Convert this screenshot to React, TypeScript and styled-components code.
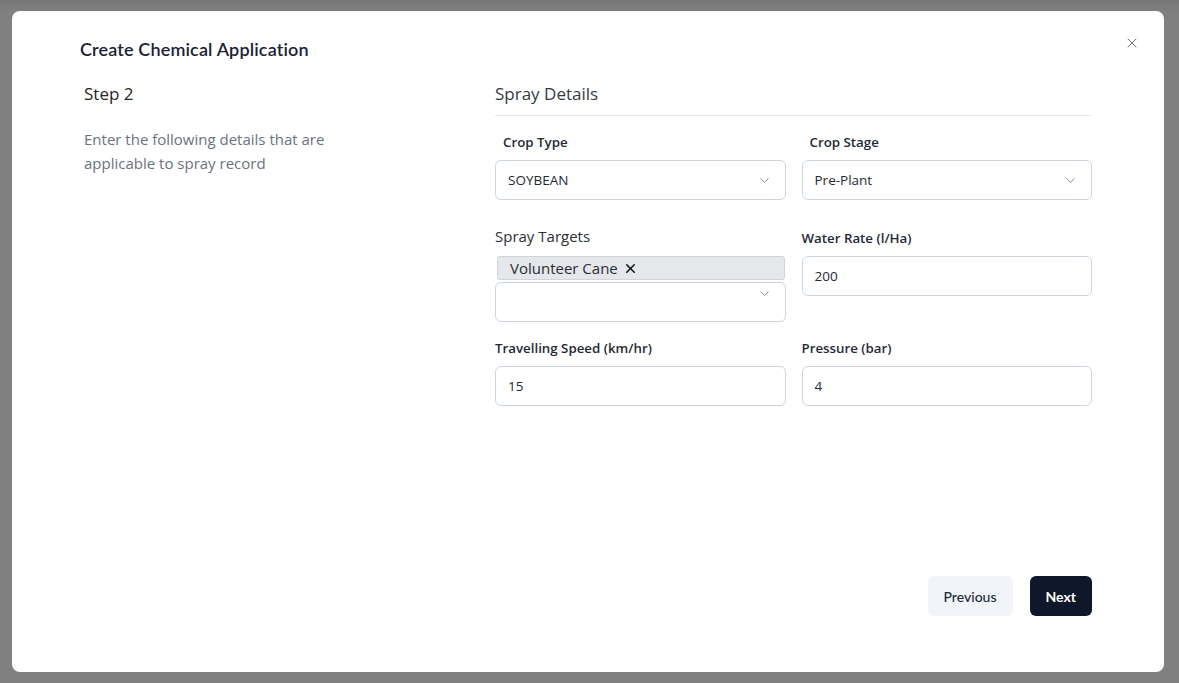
import styled, { createGlobalStyle } from 'styled-components'
import { ChevronDown, X } from 'lucide-react'

const GlobalStyle = createGlobalStyle`
    html, body {
        margin: 0;
        padding: 0;
        height: 100%;
    }
    body {
        font-family: 'Open Sans', 'Noto Sans', sans-serif;
        background: #808080;
    }
`

const Backdrop = styled.div`
    box-sizing: border-box;
    width: 1179px;
    height: 683px;
    padding: 11px 15px 11px 12px;
    background: linear-gradient(180deg, #777777 0, #808080 12px, #808080 100%);
`

const Modal = styled.div`
    box-sizing: border-box;
    height: 661px;
    display: flex;
    flex-direction: column;
    padding: 24px 72px 56px 68px;
    background: #ffffff;
    border-radius: 8px;
    position: relative;
`

const Header = styled.div`
    display: flex;
    align-items: center;
    height: 28px;
`

const Title = styled.h2`
    margin: 0;
    font-family: 'Lato', sans-serif;
    font-size: 18px;
    font-weight: 600;
    color: #1a2236;
    letter-spacing: 0.15px;
`

const CloseButton = styled.button`
    position: absolute;
    top: 20px;
    right: 20px;
    width: 24px;
    height: 24px;
    padding: 0;
    border: none;
    background: transparent;
    color: #6b7280;
    display: flex;
    align-items: center;
    justify-content: center;
`

const Body = styled.div`
    flex: 1;
    display: grid;
    grid-template-columns: 415px 1fr;
    margin-top: 19px;
    align-items: start;
`

const Intro = styled.div`
    padding-left: 4px;
`

const StepTitle = styled.div`
    font-size: 17px;
    line-height: 24px;
    color: #262626;
`

const StepText = styled.p`
    margin: 21px 0 0;
    width: 270px;
    font-size: 15px;
    line-height: 24px;
    color: #6b7280;
`

const Section = styled.div`
    display: flex;
    flex-direction: column;
`

const SectionTitle = styled.div`
    font-size: 17px;
    line-height: 24px;
    color: #333a44;
    padding-bottom: 9px;
    border-bottom: 1px solid #e2e8f0;
`

const Row = styled.div<{ $mt: number }>`
    display: grid;
    grid-template-columns: 1fr 1fr;
    column-gap: 16px;
    margin-top: ${(props) => props.$mt}px;
`

const Field = styled.div`
    display: flex;
    flex-direction: column;
`

const Label = styled.label<{ $indent?: boolean; $offset?: number }>`
    font-size: 13.3px;
    font-weight: 600;
    line-height: 20px;
    color: #1f2937;
    padding-left: ${(props) => (props.$indent ? 8 : 0)}px;
    margin-top: ${(props) => props.$offset ?? 0}px;
    margin-bottom: 8px;
`

const PlainLabel = styled.label`
    font-size: 15px;
    line-height: 24px;
    color: #2b2f36;
    margin-bottom: 8px;
`

const Box = styled.div`
    box-sizing: border-box;
    height: 40px;
    display: flex;
    align-items: center;
    justify-content: space-between;
    padding: 0 13px 0 12px;
    border: 1px solid #cbd5e1;
    border-radius: 6px;
    font-size: 13.5px;
    color: #1f2937;
    background: #fff;
`

const TopChevronBox = styled(Box)`
    align-items: flex-start;
    padding-top: 3px;
    justify-content: flex-end;
`

const Chip = styled.div`
    box-sizing: border-box;
    height: 24px;
    margin: 0 1px 2px 2px;
    display: flex;
    align-items: center;
    gap: 5px;
    padding: 0 12px;
    background: #e5e7eb;
    border: 1px solid #d1d5db;
    border-radius: 3px;
    font-size: 15px;
    color: #2b2f36;
`

const Footer = styled.div`
    display: flex;
    justify-content: flex-end;
    gap: 17px;
`

const Button = styled.button<{ $primary?: boolean }>`
    height: 40px;
    padding: 0 16px;
    border: none;
    border-radius: 6px;
    font-family: 'Lato', sans-serif;
    font-size: 14px;
    font-weight: ${(props) => (props.$primary ? 700 : 500)};
    background: ${(props) => (props.$primary ? '#0f172a' : '#f1f5f9')};
    color: ${(props) => (props.$primary ? '#ffffff' : '#1e293b')};
`

const chevron = <ChevronDown size={15} strokeWidth={1.4} color="#7c828c" />

export default function App() {
    return (
        <>
            <GlobalStyle />
            <Backdrop>
                <Modal>
                    <Header>
                        <Title>Create Chemical Application</Title>
                    </Header>
                    <CloseButton aria-label="Close">
                        <X size={16} strokeWidth={1.5} />
                    </CloseButton>
                    <Body>
                        <Intro>
                            <StepTitle>Step 2</StepTitle>
                            <StepText>
                                Enter the following details that are applicable to spray record
                            </StepText>
                        </Intro>
                        <Section>
                            <SectionTitle>Spray Details</SectionTitle>
                            <Row $mt={16}>
                                <Field>
                                    <Label $indent>Crop Type</Label>
                                    <Box>
                                        SOYBEAN
                                        {chevron}
                                    </Box>
                                </Field>
                                <Field>
                                    <Label $indent>Crop Stage</Label>
                                    <Box>
                                        Pre-Plant
                                        {chevron}
                                    </Box>
                                </Field>
                            </Row>
                            <Row $mt={24}>
                                <Field>
                                    <PlainLabel>Spray Targets</PlainLabel>
                                    <Chip>
                                        Volunteer Cane
                                        <X size={15} strokeWidth={2.4} color="#111" />
                                    </Chip>
                                    <TopChevronBox>{chevron}</TopChevronBox>
                                </Field>
                                <Field>
                                    <Label $offset={4}>Water Rate (l/Ha)</Label>
                                    <Box>200</Box>
                                </Field>
                            </Row>
                            <Row $mt={16}>
                                <Field>
                                    <Label>Travelling Speed (km/hr)</Label>
                                    <Box>15</Box>
                                </Field>
                                <Field>
                                    <Label>Pressure (bar)</Label>
                                    <Box>4</Box>
                                </Field>
                            </Row>
                        </Section>
                    </Body>
                    <Footer>
                        <Button>Previous</Button>
                        <Button $primary>Next</Button>
                    </Footer>
                </Modal>
            </Backdrop>
        </>
    )
}
